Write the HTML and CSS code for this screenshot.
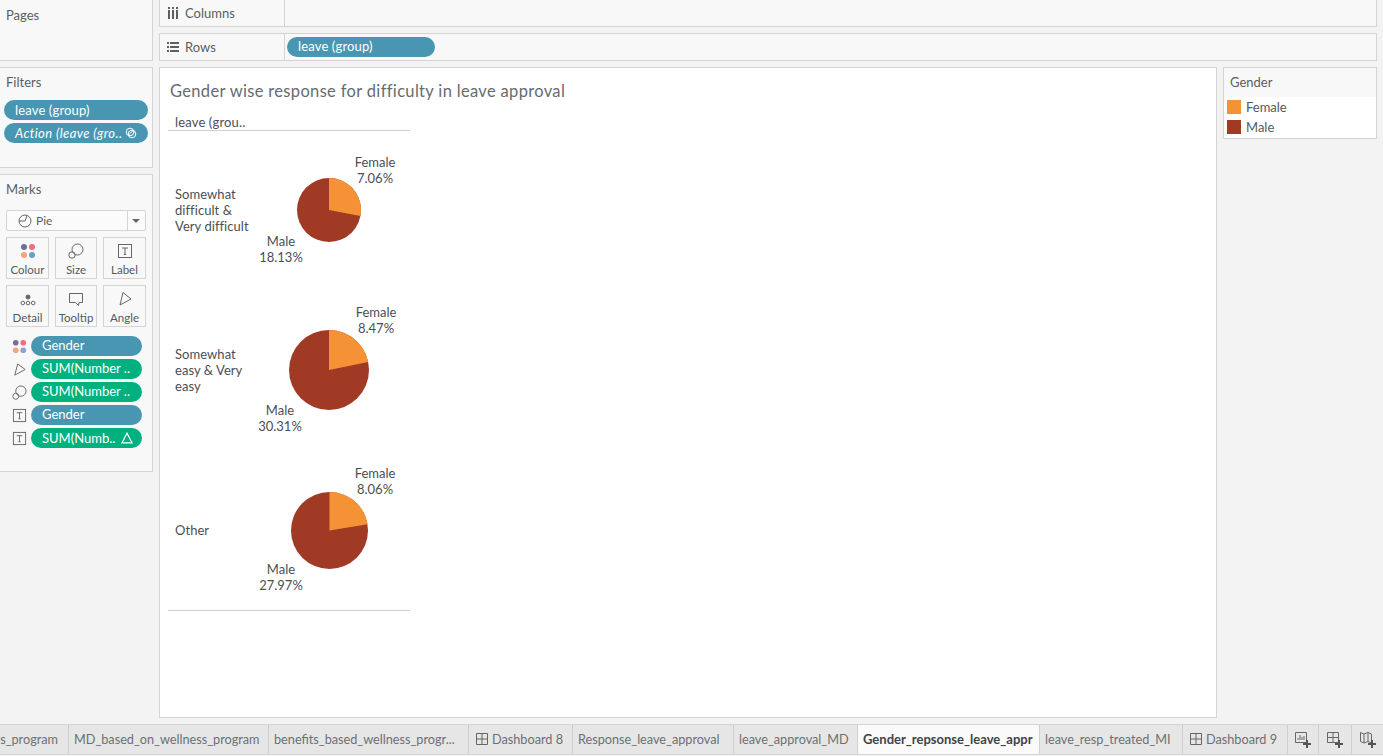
FILE: index.html
```html
<!DOCTYPE html>
<html lang="en">
<head>
<meta charset="utf-8">
<title>Gender wise response for difficulty in leave approval</title>
<link rel="stylesheet" href="styles.css">
</head>
<body>
<div class="app">
  <div class="workspace">
    <aside class="side">
      <section class="panel pages"><h2 class="panel-title">Pages</h2></section>
      <section class="panel filters">
        <h2 class="panel-title">Filters</h2>
        <div class="filter-pills">
          <div class="pill blue">leave (group)</div>
          <div class="pill blue action"><span>Action (leave (gro..</span>
            <svg class="ico-link" viewBox="0 0 12 12"><circle cx="5" cy="5" r="3.8"/><circle cx="7" cy="7" r="3.8"/><path d="M3.5 8 8 3.5"/></svg>
          </div>
        </div>
      </section>
      <section class="panel marks">
        <h2 class="panel-title">Marks</h2>
        <div class="mark-select">
          <svg class="ico-pie" viewBox="0 0 14 14"><circle cx="7" cy="7" r="6"/><path d="M7 7 9 1.4M7 7H1"/></svg>
          <span class="mark-select-text">Pie</span>
          <span class="mark-select-arrow"></span>
        </div>
        <div class="mark-cards">
          <div class="card">
            <svg class="ico-card" viewBox="0 0 16 16"><circle class="d1" cx="4" cy="4" r="3"/><circle class="d2" cx="12" cy="4" r="3"/><circle class="d3" cx="4" cy="12" r="3"/><circle class="d4" cx="12" cy="12" r="3"/></svg>
            <span>Colour</span>
          </div>
          <div class="card">
            <svg class="ico-card line" viewBox="0 0 16 16"><circle cx="9.5" cy="6.5" r="5.5"/><circle cx="4" cy="12" r="3.2"/></svg>
            <span>Size</span>
          </div>
          <div class="card">
            <svg class="ico-card line" viewBox="0 0 16 16"><rect x="1.5" y="1.5" width="13" height="13"/><path d="M5 5h6M8 5v6.5M6.8 11.5h2.4"/></svg>
            <span>Label</span>
          </div>
          <div class="card">
            <svg class="ico-card line thin" viewBox="0 0 16 16"><circle class="solid" cx="8" cy="6" r="2"/><circle cx="2.8" cy="12" r="1.8"/><circle cx="8" cy="12" r="1.8"/><circle cx="13.2" cy="12" r="1.8"/></svg>
            <span>Detail</span>
          </div>
          <div class="card">
            <svg class="ico-card line" viewBox="0 0 16 16"><path d="M1.5 2.5h13v9H11l-.5 3-3-3h-6z"/></svg>
            <span>Tooltip</span>
          </div>
          <div class="card">
            <svg class="ico-card line" viewBox="0 0 16 16"><path d="M6 1.5 14 8 3 14z"/></svg>
            <span>Angle</span>
          </div>
        </div>
        <div class="mark-rows">
          <div class="mark-row">
            <svg class="ico-row" viewBox="0 0 16 16"><circle class="e1" cx="4" cy="4" r="3"/><circle class="e2" cx="12" cy="4" r="3"/><circle class="e3" cx="4" cy="12" r="3"/><circle class="e4" cx="12" cy="12" r="3"/></svg>
            <div class="pill blue">Gender</div>
          </div>
          <div class="mark-row">
            <svg class="ico-row line" viewBox="0 0 16 16"><path d="M6 2 14 8 3 14z"/></svg>
            <div class="pill green">SUM(Number ..</div>
          </div>
          <div class="mark-row">
            <svg class="ico-row line" viewBox="0 0 16 16"><circle cx="9.5" cy="6.5" r="5.5"/><circle cx="4" cy="12" r="3.2"/></svg>
            <div class="pill green">SUM(Number ..</div>
          </div>
          <div class="mark-row">
            <svg class="ico-row line" viewBox="0 0 16 16"><rect x="1.5" y="1.5" width="13" height="13"/><path d="M5 5h6M8 5v6.5M6.8 11.5h2.4"/></svg>
            <div class="pill blue">Gender</div>
          </div>
          <div class="mark-row">
            <svg class="ico-row line" viewBox="0 0 16 16"><rect x="1.5" y="1.5" width="13" height="13"/><path d="M5 5h6M8 5v6.5M6.8 11.5h2.4"/></svg>
            <div class="pill green delta"><span>SUM(Numb..</span>
              <svg class="ico-delta" viewBox="0 0 12 12"><path d="M6 1.2 11 10.8H1z"/></svg>
            </div>
          </div>
        </div>
      </section>
    </aside>

    <main class="main">
      <div class="shelf">
        <div class="shelf-label">
          <svg class="ico-shelf" viewBox="0 0 12 12"><path d="M1 0h2v2H1zM5 0h2v2H5zM9 0h2v2H9zM1 3h2v9H1zM5 3h2v9H5zM9 3h2v9H9z"/></svg>
          <span>Columns</span>
        </div>
        <div class="shelf-body"></div>
      </div>
      <div class="shelf rows">
        <div class="shelf-label">
          <svg class="ico-shelf" viewBox="0 0 12 12"><path d="M0 1h2v2H0zM3 1h9v2H3zM0 5h2v2H0zM3 5h9v2H3zM0 9h2v2H0zM3 9h9v2H3z"/></svg>
          <span>Rows</span>
        </div>
        <div class="shelf-body"><div class="pill blue rows-pill">leave (group)</div></div>
      </div>

      <div class="stage">
        <section class="view">
          <h1 class="view-title">Gender wise response for difficulty in leave approval</h1>
          <div class="chart">
            <div class="chart-head">leave (grou..</div>
            <div class="chart-row">
              <div class="row-label">Somewhat<br>difficult &amp;<br>Very difficult</div>
              <div class="pie-cell pie-a">
                <div class="pie-text female">Female<br>7.06%</div>
                <svg class="pie" width="64" height="64" viewBox="-32 -32 64 64"><circle class="male-fill" r="32"/><path class="female-fill" d="M0 0V-32A32 32 0 0 1 31.4 6.05Z"/></svg>
                <div class="pie-text male">Male<br>18.13%</div>
              </div>
            </div>
            <div class="chart-row">
              <div class="row-label">Somewhat<br>easy &amp; Very<br>easy</div>
              <div class="pie-cell pie-b">
                <div class="pie-text female">Female<br>8.47%</div>
                <svg class="pie" width="80" height="80" viewBox="-40 -40 80 80"><circle class="male-fill" r="40"/><path class="female-fill" d="M0 0V-40A40 40 0 0 1 39.2 -7.9Z"/></svg>
                <div class="pie-text male">Male<br>30.31%</div>
              </div>
            </div>
            <div class="chart-row">
              <div class="row-label">Other</div>
              <div class="pie-cell pie-c">
                <div class="pie-text female">Female<br>8.06%</div>
                <svg class="pie" width="77" height="77" viewBox="-38.5 -38.5 77 77"><circle class="male-fill" r="38.5"/><path class="female-fill" d="M0 0V-38.5A38.5 38.5 0 0 1 38 -6.35Z"/></svg>
                <div class="pie-text male">Male<br>27.97%</div>
              </div>
            </div>
          </div>
        </section>
        <aside class="legend">
          <h2 class="legend-title">Gender</h2>
          <div class="legend-items">
            <div class="legend-item"><span class="swatch female-swatch"></span>Female</div>
            <div class="legend-item"><span class="swatch male-swatch"></span>Male</div>
          </div>
        </aside>
      </div>
    </main>
  </div>

  <nav class="tabs">
    <div class="tab clipped">s_program</div>
    <div class="tab">MD_based_on_wellness_program</div>
    <div class="tab">benefits_based_wellness_progr...</div>
    <div class="tab tab-dash">
      <svg class="ico-dash" viewBox="0 0 12 12"><path d="M.5.5h11v11H.5zM6 .5v11M.5 6h11"/></svg>Dashboard 8
    </div>
    <div class="tab">Response_leave_approval</div>
    <div class="tab">leave_approval_MD</div>
    <div class="tab active">Gender_repsonse_leave_appr</div>
    <div class="tab">leave_resp_treated_MI</div>
    <div class="tab tab-dash">
      <svg class="ico-dash" viewBox="0 0 12 12"><path d="M.5.5h11v11H.5zM6 .5v11M.5 6h11"/></svg>Dashboard 9
    </div>
    <div class="tab tab-icon">
      <svg class="ico-add" viewBox="0 0 16 16"><path class="frame" d="M.5.5h11v10H.5zM3 8V6M5 8V3M7 8V5M9 8V4"/><path class="plus" d="M12 8v8M8 12h8"/></svg>
    </div>
    <div class="tab tab-icon">
      <svg class="ico-add" viewBox="0 0 16 16"><path class="frame" d="M.5.5h11v10H.5zM6 .5v10M.5 5.5h11"/><path class="plus" d="M12 8v8M8 12h8"/></svg>
    </div>
    <div class="tab tab-icon">
      <svg class="ico-add" viewBox="0 0 16 16"><path class="frame" d="M.5.5 4 2l4-1.5 3.5 1.5v9L8 9.5 4 11 .5 9.5zM4 2v9M8 .5v9"/><path class="plus" d="M12 8v8M8 12h8"/></svg>
    </div>
  </nav>
</div>
</body>
</html>
```
FILE: styles.css
```css
* { box-sizing: border-box; }
html, body { margin: 0; height: 100%; }
body {
  background: #f3f3f3;
  color: #4b4f54;
  font-family: Lato, "Open Sans", sans-serif;
  font-size: 13px;
  overflow: hidden;
}
h1, h2 { margin: 0; font-weight: 400; }
svg { display: block; }

.app { width: 1383px; height: 756px; display: flex; flex-direction: column; }
.workspace { height: 724px; display: grid; grid-template-columns: 153px 1fr; column-gap: 6px; }

.side { display: flex; flex-direction: column; }
.panel {
  background: #f8f8f8;
  border-right: 1px solid #d4d4d4;
  border-bottom: 1px solid #d4d4d4;
}
.panel-title { font-size: 13px; line-height: 16px; color: #5a5e63; padding-left: 6px; }
.pages { height: 61px; padding-top: 7px; }
.filters { height: 101px; margin-top: 6px; border-top: 1px solid #d4d4d4; padding-top: 6px; }
.filter-pills { display: flex; flex-direction: column; gap: 3px; margin: 10px 4px 0; }
.marks { height: 298px; margin-top: 6px; border-top: 1px solid #d4d4d4; padding-top: 6px; }

.pill {
  height: 20px;
  border-radius: 10px;
  color: #fff;
  line-height: 19px;
  padding-left: 11px;
  white-space: nowrap;
  overflow: hidden;
}
.blue { background: #4996b2; }
.green { background: #00b180; }
.filter-pills .pill { line-height: 20px; }
.filter-pills .pill, .rows-pill { letter-spacing: .15px; }
.filter-pills .action { display: flex; align-items: center; font-style: italic; letter-spacing: .4px; }
.ico-link { width: 12px; height: 12px; margin-left: 3px; fill: none; stroke: #fff; stroke-width: 1; }

.mark-select {
  height: 21px;
  margin: 13px 6px 0;
  background: #fbfbfb;
  border: 1px solid #d4d4d4;
  border-radius: 2px;
  display: flex;
  align-items: center;
  padding-left: 11px;
  color: #5c6065;
}
.ico-pie { width: 14px; height: 14px; fill: none; stroke: #666; stroke-width: 1; }
.mark-select-text { margin-left: 4px; flex: 1; font-size: 12px; }
.mark-select-arrow {
  width: 18px;
  height: 19px;
  border-left: 1px solid #d4d4d4;
  position: relative;
}
.mark-select-arrow::after {
  content: "";
  position: absolute;
  left: 4px;
  top: 8px;
  border: 4px solid transparent;
  border-top: 4px solid #666;
  border-bottom: 0;
}

.mark-cards {
  display: grid;
  grid-template-columns: 43px 42px 43px;
  grid-auto-rows: 42px;
  gap: 6px;
  margin: 6px 6px 0;
}
.card {
  border: 1px solid #d4d4d4;
  background: #f8f8f8;
  display: flex;
  flex-direction: column;
  align-items: center;
  font-size: 11.5px;
  line-height: 14px;
  padding-top: 5px;
  color: #55595e;
}
.card span { margin-top: 4px; }
.ico-card { width: 16px; height: 16px; }
.line { fill: none; stroke: #666; stroke-width: 1; }
.thin .solid { fill: #666; }
.d1 { fill: #6f6f95; }
.d2 { fill: #ef6d82; }
.d3 { fill: #f3a37e; }
.d4 { fill: #6f9cc2; }
.e1 { fill: #75708f; }
.e2 { fill: #ef6d82; }
.e3 { fill: #f3a37e; }
.e4 { fill: #8fa0cc; }

.mark-rows { display: flex; flex-direction: column; gap: 3px; margin-top: 9px; }
.mark-row { display: flex; align-items: center; padding-left: 12px; }
.ico-row { width: 15px; height: 15px; margin-right: 4px; }
.mark-row .pill { width: 111px; }
.delta { display: flex; align-items: center; }
.ico-delta { width: 12px; height: 12px; margin-left: 6px; fill: none; stroke: #fff; stroke-width: 1.2; }

.main { display: flex; flex-direction: column; padding-right: 6px; min-width: 0; }
.shelf {
  height: 27px;
  display: flex;
  background: #f8f8f8;
  border: 1px solid #d4d4d4;
  border-top: 0;
}
.shelf.rows { height: 28px; margin-top: 6px; border-top: 1px solid #d4d4d4; }
.shelf-label {
  width: 125px;
  display: flex;
  align-items: center;
  gap: 6px;
  padding-left: 7px;
  padding-bottom: 1px;
  border-right: 1px solid #d4d4d4;
  color: #5a5e63;
}
.ico-shelf { width: 12px; height: 12px; fill: #5c6065; }
.shelf-body { flex: 1; padding: 3px 2px; }
.rows-pill { width: 148px; }

.stage { flex: 1; display: grid; grid-template-columns: 1058px 154px; column-gap: 6px; margin-top: 6px; align-items: start; }
.view {
  height: 651px;
  background: #fff;
  border: 1px solid #d4d4d4;
  padding-left: 8px;
}
.view-title { font-size: 16.5px; line-height: 20px; color: #676b70; margin: 13px 0 0 2px; letter-spacing: .33px; white-space: nowrap; }
.chart { width: 242px; border-bottom: 1px solid #cfcfcf; margin-top: 11px; }
.chart-head { height: 19px; margin-bottom: -1px; padding: 2px 0 0 7px; line-height: 16px; letter-spacing: .15px; border-bottom: 1px solid #cfcfcf; }
.chart-row { height: 160px; display: grid; grid-template-columns: 80px 162px; }
.row-label { align-self: center; padding-left: 7px; line-height: 16px; white-space: nowrap; letter-spacing: .05px; }
.pie-cell { position: relative; display: flex; align-items: center; justify-content: center; }
.male-fill { fill: #a13a25; }
.female-fill { fill: #f59236; }
.pie-text { position: absolute; width: 60px; text-align: center; line-height: 16px; }
.pie-a .female { left: 97px; top: 24px; }
.pie-a .male { left: 3px; top: 103px; }
.pie-b .female { left: 98px; top: 14px; }
.pie-b .male { left: 2px; top: 112px; }
.pie-c .female { left: 97px; top: 15px; }
.pie-c .male { left: 3px; top: 111px; }

.legend { height: 72px; background: #fff; border: 1px solid #d4d4d4; }
.legend-title { height: 29px; background: #f8f8f8; font-size: 13px; line-height: 29px; padding-left: 6px; color: #5a5e63; }
.legend-items { padding: 3px 3px 0; display: flex; flex-direction: column; gap: 6px; }
.legend-item { height: 14px; display: flex; align-items: center; gap: 5px; line-height: 14px; color: #55595e; }
.swatch { width: 14px; height: 14px; }
.female-swatch { background: #f59236; }
.male-swatch { background: #a13a25; }

.tabs {
  height: 31px;
  display: grid;
  grid-template-columns: 68px 200px 200px 104px 161px 124px 182px 143px 105px 31px 33px 32px;
  border-top: 1px solid #d4d4d4;
  border-bottom: 1px solid #d4d4d4;
}
.tab {
  background: #e6e6e6;
  border-left: 1px solid #cfcfcf;
  display: flex;
  align-items: center;
  padding: 0 0 1px 5px;
  color: #6c7075;
  font-size: 12.7px;
  white-space: nowrap;
  overflow: hidden;
}
.clipped { justify-content: flex-end; padding: 0 10px 1px 0; border-left: 0; }
.tab-dash { padding-left: 7px; }
.active { background: #fafafa; color: #3f4347; font-weight: 700; font-size: 13px; padding-bottom: 2px; }
.ico-dash { width: 12px; height: 12px; margin-right: 4px; fill: none; stroke: #666; stroke-width: 1; }
.tab-icon { justify-content: center; padding: 0; }
.ico-add { width: 16px; height: 16px; fill: none; }
.frame { stroke: #666; stroke-width: 1; }
.plus { stroke: #555; stroke-width: 2; }
```
